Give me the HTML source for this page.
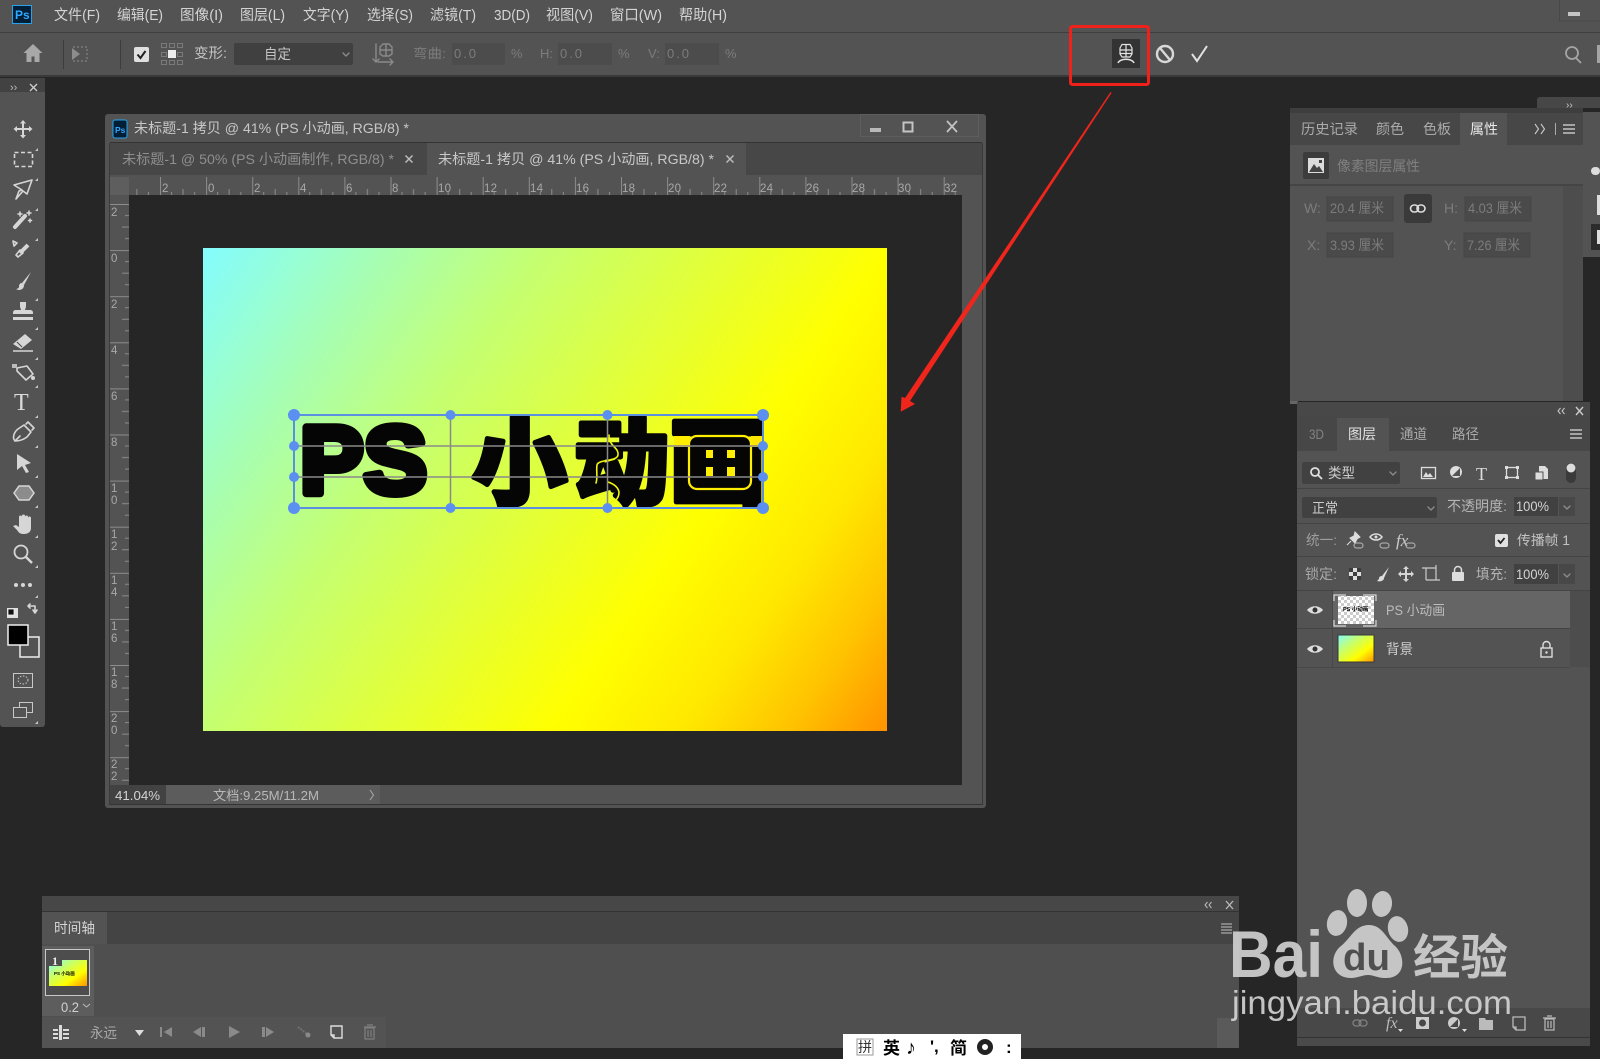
<!DOCTYPE html>
<html><head><meta charset="utf-8"><title>Photoshop</title>
<style>
html,body{margin:0;padding:0;background:#262626;width:1600px;height:1059px;overflow:hidden}
svg{display:block}
text{font-family:"Liberation Sans","Noto Sans CJK SC",sans-serif;font-size:14px;fill:#cfcfcf}
.m{fill:#d4d4d4;font-size:14.5px}
.d{fill:#7c7c7c;font-size:13px}
.s{fill:#aaa;font-size:13px}
.b{fill:#c8c8c8;font-size:14px}
.r{fill:#a8a8a8;font-size:11.5px}
.i{fill:none;stroke:#d6d6d6;stroke-width:1.6;stroke-linejoin:round;stroke-linecap:round}
.f{fill:#d6d6d6;stroke:none}
.g{fill:none;stroke:#8a8a8a;stroke-width:1.4;stroke-linecap:round;stroke-linejoin:round}
.gf{fill:#8a8a8a;stroke:none}
.big{font-family:"Noto Sans CJK SC",sans-serif;font-weight:900;font-size:95px;fill:#050505;stroke:#050505;stroke-width:5;stroke-linejoin:round}
.bw{fill:#cfcfcf;fill-opacity:.92}
</style></head><body>
<svg width="1600" height="1059" viewBox="0 0 1600 1059" xmlns="http://www.w3.org/2000/svg">
<defs>
<linearGradient id="gr" gradientUnits="userSpaceOnUse" x1="203" y1="248" x2="887" y2="731">
<stop offset="0" stop-color="#84fdff"/><stop offset=".33" stop-color="#c4ff72"/><stop offset=".67" stop-color="#ffff00"/><stop offset=".8" stop-color="#ffe800"/><stop offset=".9" stop-color="#ffc400"/><stop offset="1" stop-color="#ff9200"/>
</linearGradient>
<linearGradient id="gs" x1="0" y1="0" x2="1" y2="1">
<stop offset="0" stop-color="#7ffdff"/><stop offset=".33" stop-color="#c4ff72"/><stop offset=".67" stop-color="#ffff00"/><stop offset="1" stop-color="#ff9200"/>
</linearGradient>
<pattern id="ch" width="6" height="6" patternUnits="userSpaceOnUse"><rect width="6" height="6" fill="#fff"/><rect width="3" height="3" fill="#ccc"/><rect x="3" y="3" width="3" height="3" fill="#ccc"/></pattern>
<pattern id="htick" x="160" y="177" width="46.1" height="18" patternUnits="userSpaceOnUse"><path d="M.5 0V18M11.5 15V18M23 12V18M34.6 15V18" stroke="#8c8c8c" stroke-width="1" fill="none"/></pattern>
<pattern id="vtick" x="110" y="204" width="19" height="46.1" patternUnits="userSpaceOnUse"><path d="M0 .5H19M15 11.5H19M12 23H19M15 34.6H19" stroke="#8c8c8c" stroke-width="1" fill="none"/></pattern>
</defs>
<rect width="1600" height="1059" fill="#262626"/>

<!-- menu -->
<rect width="1600" height="32" fill="#535353"/><rect y="32" width="1600" height="1" fill="#3e3e3e"/>
<rect y="33" width="1600" height="42" fill="#535353"/><rect y="75" width="1600" height="2" fill="#3a3a3a"/>
<rect x="12.5" y="5.5" width="19" height="18" fill="#001e36" stroke="#27a4e8"/>
<text x="15" y="19" style="font-size:12px;fill:#31a8ff;font-weight:bold">Ps</text>
<text class="m" x="54" y="20" textLength="46" lengthAdjust="spacingAndGlyphs">文件(F)</text>
<text class="m" x="117" y="20" textLength="46" lengthAdjust="spacingAndGlyphs">编辑(E)</text>
<text class="m" x="180" y="20" textLength="43" lengthAdjust="spacingAndGlyphs">图像(I)</text>
<text class="m" x="240" y="20" textLength="45" lengthAdjust="spacingAndGlyphs">图层(L)</text>
<text class="m" x="303" y="20" textLength="46" lengthAdjust="spacingAndGlyphs">文字(Y)</text>
<text class="m" x="367" y="20" textLength="46" lengthAdjust="spacingAndGlyphs">选择(S)</text>
<text class="m" x="430" y="20" textLength="46" lengthAdjust="spacingAndGlyphs">滤镜(T)</text>
<text class="m" x="494" y="20" textLength="36" lengthAdjust="spacingAndGlyphs">3D(D)</text>
<text class="m" x="546" y="20" textLength="47" lengthAdjust="spacingAndGlyphs">视图(V)</text>
<text class="m" x="610" y="20" textLength="52" lengthAdjust="spacingAndGlyphs">窗口(W)</text>
<text class="m" x="679" y="20" textLength="48" lengthAdjust="spacingAndGlyphs">帮助(H)</text>
<rect x="1559.5" y="-1" width="42" height="22" fill="none" stroke="#484848"/><rect x="1568" y="12" width="12" height="4" fill="#c4c4c4"/>

<!-- options -->
<path d="M33 44l-9.5 9h3v9h5v-5.5h3V62h5v-9h3z" fill="#a8a8a8"/>
<rect x="63" y="40" width="1" height="29" fill="#3c3c3c"/>
<path d="M73 47h14v14H73z" fill="none" stroke="#8c8c8c" stroke-dasharray="2 2"/><path d="M72 48l8 6-8 6z" fill="#8c8c8c"/>
<rect x="120" y="40" width="1" height="29" fill="#3c3c3c"/>
<rect x="134" y="47" width="15" height="15" rx="2" fill="#e0e0e0"/><path d="M137.500 54.500l3 3.500 5-7" fill="none" stroke="#222" stroke-width="2"/>
<g fill="none" stroke="#7a7a7a"><rect x="161.500" y="43.500" width="5" height="4"/><rect x="169.500" y="43.500" width="5" height="4"/><rect x="177.500" y="43.500" width="5" height="4"/><rect x="161.500" y="52.500" width="5" height="4"/><rect x="177.500" y="52.500" width="5" height="4"/><rect x="161.500" y="60.500" width="5" height="4"/><rect x="169.500" y="60.500" width="5" height="4"/><rect x="177.500" y="60.500" width="5" height="4"/></g><rect x="168" y="50" width="8" height="8" fill="#eee"/>
<text x="194" y="58" style="font-size:14px;fill:#c4c4c4" textLength="33" lengthAdjust="spacingAndGlyphs">变形:</text>
<rect x="234" y="43" width="119" height="22" rx="2" fill="#404040"/>
<text x="264" y="59" style="font-size:14px;fill:#c4c4c4" textLength="27" lengthAdjust="spacingAndGlyphs">自定</text>
<path d="M343 53l3 3 3-3" class="g"/>
<g class="g"><path d="M376 44v18M373 59l3 3 3-3M378 62h15M390 59l3 3-3 3"/><path d="M380 47l3-3h6l3 3v7l-3 2h-6l-3-2zM380 50h12M386 44v12"/></g>
<text class="d" x="413" y="58" textLength="33" lengthAdjust="spacingAndGlyphs">弯曲:</text>
<rect x="452" y="43" width="53" height="22" fill="#4c4c4c"/><text class="d" x="454" y="58" textLength="22">0.0</text><text class="d" x="511" y="58">%</text>
<text class="d" x="540" y="58">H:</text><rect x="558" y="43" width="54" height="22" fill="#4c4c4c"/><text class="d" x="560" y="58" textLength="22">0.0</text><text class="d" x="618" y="58">%</text>
<text class="d" x="648" y="58">V:</text><rect x="665" y="43" width="54" height="22" fill="#4c4c4c"/><text class="d" x="667" y="58" textLength="22">0.0</text><text class="d" x="725" y="58">%</text>
<rect x="1112" y="39" width="28" height="29" fill="#333"/>
<g fill="none" stroke="#e4e4e4" stroke-width="1.2"><path d="M1120 48l2-3.500h8l2 3.500v6l-2 3h-8l-2-3zM1120 50h12M1120 53.500h12M1126 44.500v12"/><path d="M1118 63c2-5 14-5 16 0" stroke-width="1.500"/></g>
<g fill="none" stroke="#d8d8d8" stroke-width="2.400"><ellipse cx="1165" cy="54" rx="8" ry="8"/><path d="M1160 48l10 12"/></g>
<path d="M1192 54l5 7 10-15" fill="none" stroke="#e2e2e2" stroke-width="2"/>
<g fill="none" stroke="#a4a4a4" stroke-width="1.800"><circle cx="1572" cy="53" r="6"/><path d="M1576 58l5 5"/></g><rect x="1597" y="45" width="3" height="18" fill="#a4a4a4"/>

<!-- tools -->
<rect x="0" y="78" width="45" height="649" rx="3" fill="#535353"/><rect x="0" y="78" width="45" height="14" fill="#424242"/>
<text x="10" y="91" style="font-size:11px;fill:#bbb">››</text><path d="M30 84l7 7M37 84l-7 7" stroke="#ccc" stroke-width="1.400"/>
<g transform="translate(23,129)"><path class="f" d="M0-9l3 3.500H1V-1h5v-2l3.500 3L6 3V1H1v5h2l-3 3.500L-3 6h2V1h-5v2l-3.500-3L-6-3v2h5v-4.500h-2z"/></g>
<rect x="14.500" y="152.500" width="18" height="14" fill="none" stroke="#d6d6d6" stroke-width="1.600" stroke-dasharray="4 2.500"/>
<path class="i" d="M14 185l18-5-5 14-4-3-7 8 3-8 3-1z"/>
<g transform="translate(23,219)"><path d="M-8 8L2-3" stroke="#d6d6d6" stroke-width="4" stroke-linecap="round"/><path class="i" d="M-3-7v4M-5-5h4M6-8v4M4-6h4M7 0v3M5.500 1.500h3"/></g>
<g transform="translate(23,249)"><path d="M-3 4L5-4" stroke="#d6d6d6" stroke-width="4"/><path class="i" d="M-5 8l-2-2 4-5 3 3zM-10-8l4 2-3 3z"/></g>
<g transform="translate(23,281)"><path d="M8-9L-1 2l2 2z" fill="#d6d6d6"/><path d="M-1 2c-3 0-3 3-3 4s-2 2-3 2c3 2 8 1 8-4z" fill="#d6d6d6"/></g>
<g transform="translate(23,311)"><path class="f" d="M-3-9h6v4c0 2-1 3-1 4h5c2 0 3 1 3 3v1H-10V2c0-2 1-3 3-3h5c0-1-1-2-1-4zM-10 6H10v3H-10z"/></g>
<g transform="translate(23,342)"><path class="f" d="M-10 2L2-8l7 6L-2 7z"/><path d="M-10 9H10" stroke="#d6d6d6" stroke-width="1.400"/><path d="M-6 0l5 5" stroke="#535353" stroke-width="1.200"/></g>
<g transform="translate(23,372)"><path class="i" d="M-6-4L4-6l6 8-7 6-9-9z"/><circle cx="10" cy="6" r="2" fill="#d6d6d6"/><path d="M-11-8h5v4h-5z" fill="#bbb"/></g>
<text x="14" y="410" style="font-family:'Liberation Serif',serif;font-size:24px;fill:#dcdcdc">T</text>
<g transform="translate(23,433)"><path class="i" d="M-8 8c-3-3-1-9 3-12L1-8l7 7-4 5c-4 3-9 4-12 4zM-8 8l5-5M3-9l2-2 6 6-2 2"/></g>
<path class="f" d="M17 454l14 9-6 2 4 7-3 1-4-7-5 4z"/>
<path d="M14 493l5-7h10l5 7-5 7H19z" fill="#8c8c8c" stroke="#d6d6d6" stroke-width="1.500"/>
<g transform="translate(23,524)"><path class="f" d="M-10 2l3-1 3 2V-7a1.500 1.500 0 013 0v-1a1.500 1.500 0 013 0v1a1.500 1.500 0 013 0v1a1.500 1.500 0 013 0V4c0 4-3 6-7 6s-5-1-7-4z"/></g>
<g fill="none" stroke="#d6d6d6" stroke-width="1.800"><circle cx="21" cy="552" r="6.500"/><path d="M26 557l6 6" stroke-width="2.400"/></g>
<g fill="#d6d6d6"><circle cx="16" cy="585" r="2"/><circle cx="23" cy="585" r="2"/><circle cx="30" cy="585" r="2"/></g>
<g><rect x="7" y="608" width="11" height="10" fill="#e0e0e0"/><rect x="8" y="609" width="6" height="6" fill="#111" stroke="#eee" stroke-width=".8"/></g>
<path class="i" d="M28 606h7v6M33 610l2 3 2-3M28 606l2-2M28 606l2 2"/>
<rect x="20" y="637" width="19" height="20" fill="#535353" stroke="#eee" stroke-width="1.500"/>
<rect x="8" y="625" width="20" height="20" fill="#000" stroke="#eee" stroke-width="1.500"/>
<rect x="13.500" y="673.500" width="19" height="14" fill="none" stroke="#c8c8c8"/><ellipse cx="23" cy="680" rx="5" ry="4" fill="none" stroke="#c8c8c8" stroke-dasharray="1.500 1.500"/>
<rect x="19.500" y="702.500" width="13" height="10" fill="#535353" stroke="#c8c8c8"/><rect x="13.500" y="707.500" width="13" height="10" fill="#535353" stroke="#c8c8c8"/>
<g fill="#c8c8c8"><path d="M38 148v3h-3zM38 178v3h-3zM38 208v3h-3zM38 238v3h-3zM38 298v3h-3zM38 327v3h-3zM38 357v3h-3zM38 385v3h-3zM38 415v3h-3zM38 445v3h-3zM38 475v3h-3zM38 505v3h-3zM38 535v3h-3zM38 565v3h-3zM38 595v3h-3zM38 721v3h-3z"/></g>

<!-- document window -->
<rect x="105" y="114" width="881" height="694" rx="3" fill="#535353"/>
<rect x="110" y="142" width="872" height="1" fill="#333"/>
<rect x="982" y="143" width="1" height="662" fill="#3a3a3a"/><rect x="109" y="143" width="1" height="662" fill="#3a3a3a"/>
<rect x="113" y="120" width="14" height="18" rx="2" fill="#001e36" stroke="#27a4e8"/>
<text x="115" y="133" style="font-size:8.500px;fill:#31a8ff;font-weight:bold">Ps</text>
<text x="134" y="133" class="b" textLength="275" lengthAdjust="spacingAndGlyphs">未标题-1 拷贝 @ 41% (PS 小动画, RGB/8) *</text>
<rect x="860.500" y="114.500" width="118" height="22" fill="none" stroke="#5e5e5e"/>
<rect x="870" y="128" width="11" height="4" fill="#b8b8b8"/><rect x="903.500" y="122.500" width="9" height="9" fill="none" stroke="#c4c4c4" stroke-width="2"/>
<path d="M947 121l10 11M957 121l-10 11" stroke="#c4c4c4" stroke-width="1.800"/>
<rect x="110" y="143" width="872" height="32" fill="#474747"/>
<rect x="427" y="143" width="319" height="32" fill="#535353"/>
<text x="122" y="164" style="font-size:14px;fill:#8f8f8f" textLength="272" lengthAdjust="spacingAndGlyphs">未标题-1 @ 50% (PS 小动画制作, RGB/8) *</text>
<path d="M405.500 155.500l7 7M412.500 155.500l-7 7" stroke="#bbb" stroke-width="1.500"/>
<text x="438" y="164" class="b" textLength="276" lengthAdjust="spacingAndGlyphs">未标题-1 拷贝 @ 41% (PS 小动画, RGB/8) *</text>
<path d="M726.500 155.500l7 7M733.500 155.500l-7 7" stroke="#bbb" stroke-width="1.500"/>
<!-- rulers -->
<rect x="110" y="177" width="852" height="18" fill="#535353"/><rect x="129" y="177" width="833" height="18" fill="url(#htick)"/>
<rect x="110" y="177" width="19" height="18" fill="#5e5e5e"/>
<rect x="110" y="195" width="19" height="590" fill="#535353"/><rect x="110" y="195" width="19" height="590" fill="url(#vtick)"/>
<g class="r">
<text class="r" x="162" y="192">2</text><text class="r" x="208" y="192">0</text><text class="r" x="254" y="192">2</text><text class="r" x="300" y="192">4</text><text class="r" x="346" y="192">6</text><text class="r" x="392" y="192">8</text><text class="r" x="438" y="192" textLength="13">10</text><text class="r" x="484" y="192" textLength="13">12</text><text class="r" x="530" y="192" textLength="13">14</text><text class="r" x="576" y="192" textLength="13">16</text><text class="r" x="622" y="192" textLength="13">18</text><text class="r" x="668" y="192" textLength="13">20</text><text class="r" x="714" y="192" textLength="13">22</text><text class="r" x="760" y="192" textLength="13">24</text><text class="r" x="806" y="192" textLength="13">26</text><text class="r" x="852" y="192" textLength="13">28</text><text class="r" x="898" y="192" textLength="13">30</text><text class="r" x="944" y="192" textLength="13">32</text>
<text class="r" x="111" y="216">2</text><text class="r" x="111" y="262">0</text><text class="r" x="111" y="308">2</text><text class="r" x="111" y="354">4</text><text class="r" x="111" y="400">6</text><text class="r" x="111" y="446">8</text>
<text class="r" x="111" y="492">1</text><text class="r" x="111" y="504">0</text><text class="r" x="111" y="538">1</text><text class="r" x="111" y="550">2</text><text class="r" x="111" y="584">1</text><text class="r" x="111" y="596">4</text><text class="r" x="111" y="630">1</text><text class="r" x="111" y="642">6</text><text class="r" x="111" y="676">1</text><text class="r" x="111" y="688">8</text><text class="r" x="111" y="722">2</text><text class="r" x="111" y="734">0</text><text class="r" x="111" y="768">2</text><text class="r" x="111" y="780">2</text>
</g>
<rect x="129" y="195" width="833" height="590" fill="#262626"/>
<rect x="203" y="248" width="684" height="483" fill="url(#gr)"/>
<!-- status -->
<rect x="110" y="785" width="872" height="19" fill="#535353"/><rect x="110" y="785" width="56" height="19" fill="#424242"/><rect x="166" y="785" width="214" height="19" fill="#5c5c5c"/>
<rect x="110" y="804" width="872" height="1" fill="#333"/>
<text x="115" y="800" style="font-size:13px;fill:#d4d4d4" textLength="45" lengthAdjust="spacingAndGlyphs">41.04%</text>
<text x="213" y="800" style="font-size:13px;fill:#b8b8b8" textLength="106" lengthAdjust="spacingAndGlyphs">文档:9.25M/11.2M</text>
<path d="M370 790l3.500 5-3.500 5" fill="none" stroke="#aaa"/>

<!-- canvas text -->
<text x="300" y="493" textLength="127" lengthAdjust="spacingAndGlyphs" style="font-family:'Liberation Sans',sans-serif;font-weight:bold;font-size:96px;fill:#050505;stroke:#050505;stroke-width:8;stroke-linejoin:round">PS</text>
<text class="big" x="472" y="497">小</text>
<text class="big" x="574" y="497">动</text>
<text class="big" x="670" y="497">画</text>
<!-- glyph detailing -->
<g fill="none" stroke="#f4f50c" stroke-width="1.600" stroke-linecap="round"><path d="M609 435c0 12 10 12 9 20-1 7-20 4-21 10-1 6 1 12-1 18M608 482c6 2 10 5 11 10 0 6-3 9-9 11"/></g>
<rect x="674" y="436" width="16" height="11" fill="#ffee00"/><rect x="751" y="436" width="12" height="11" fill="#ffe600"/>
<rect x="689" y="436" width="62" height="53" rx="8" fill="#050505" stroke="#ffee00" stroke-width="2.200"/>
<g fill="#ffee00"><rect x="706" y="450" width="7" height="8"/><rect x="727" y="450" width="8" height="8"/><rect x="706" y="467" width="7" height="9"/><rect x="727" y="467" width="8" height="9"/></g>
<g fill="none" stroke="#8a8a8a" stroke-width="1.500"><path d="M294 446H763M294 477H763M450.500 415V508M607.500 415V508"/></g>
<rect x="294" y="415" width="469" height="93" fill="none" stroke="#5d8fe0" stroke-width="2"/>
<g fill="#5b8ff0"><circle cx="294" cy="415" r="6"/><circle cx="450.500" cy="415" r="5"/><circle cx="607.500" cy="415" r="5"/><circle cx="763" cy="415" r="6"/><circle cx="294" cy="446" r="5"/><circle cx="763" cy="446" r="5"/><circle cx="294" cy="477" r="5"/><circle cx="763" cy="477" r="5"/><circle cx="294" cy="508" r="6"/><circle cx="450.500" cy="508" r="5"/><circle cx="607.500" cy="508" r="5"/><circle cx="763" cy="508" r="6"/></g>

<!-- annotation -->
<rect x="1070.500" y="26.500" width="78" height="58" rx="2" fill="none" stroke="#f0201a" stroke-width="3"/>
<path d="M1110.500 92L1111.500 93 910 401 915 404 900.700 411.700 901.500 396.700 905 398z" fill="#f0251b"/>

<!-- collapsed dock -->
<path d="M1537 108v-8a3 3 0 013-3h60v11z" fill="#474747"/><text x="1566" y="108" style="font-size:10px;fill:#ccc">››</text>
<rect x="1583" y="112" width="17" height="145" fill="#535353"/>
<rect x="1591" y="167" width="9" height="8" rx="4" fill="#ddd"/><rect x="1597" y="195" width="3" height="20" fill="#ddd"/><rect x="1591" y="224" width="9" height="26" fill="#2c2c2c"/><rect x="1597" y="230" width="3" height="14" fill="#ddd"/>

<!-- properties -->
<rect x="1290" y="108" width="293" height="293" fill="#535353"/><rect x="1290" y="108" width="293" height="5" fill="#3e3e3e"/>
<rect x="1290" y="113" width="293" height="32" fill="#474747"/><rect x="1460" y="113" width="47" height="33" fill="#535353"/>
<text class="s" x="1301" y="134" style="font-size:14px" textLength="57" lengthAdjust="spacingAndGlyphs">历史记录</text>
<text class="s" x="1376" y="134" style="font-size:14px" textLength="28" lengthAdjust="spacingAndGlyphs">颜色</text>
<text class="s" x="1423" y="134" style="font-size:14px" textLength="28" lengthAdjust="spacingAndGlyphs">色板</text>
<text x="1470" y="134" style="font-size:14px;fill:#e8e8e8" textLength="28" lengthAdjust="spacingAndGlyphs">属性</text>
<path d="M1535 124l3.500 5-3.500 5M1541 124l3.500 5-3.500 5" fill="none" stroke="#ccc" stroke-width="1.100"/><rect x="1555" y="123" width="1" height="12" fill="#aaa"/>
<path d="M1563 125h12M1563 129h12M1563 133h12" stroke="#c4c4c4" stroke-width="1.500"/>
<rect x="1303" y="152" width="26" height="27" rx="2" fill="#3c3c3c"/>
<rect x="1308" y="158" width="16" height="15" fill="#dcdcdc"/><path d="M1309 172l5-8 3 4 2-2 4 6z" fill="#444"/><rect x="1319" y="160" width="3" height="3" fill="#444"/>
<text x="1337" y="171" style="font-size:14px;fill:#808080" textLength="83" lengthAdjust="spacingAndGlyphs">像素图层属性</text>
<rect x="1290" y="184" width="293" height="2" fill="#454545"/>
<rect x="1563" y="186" width="20" height="215" fill="#4d4d4d"/>
<rect x="1327" y="197" width="66" height="24" fill="#4a4a4a" stroke="#464646"/><rect x="1465" y="197" width="66" height="24" fill="#4a4a4a" stroke="#464646"/><rect x="1327" y="233" width="66" height="24" fill="#4a4a4a" stroke="#464646"/><rect x="1464" y="233" width="66" height="24" fill="#4a4a4a" stroke="#464646"/>
<text class="d" x="1304" y="213" style="font-size:14px">W:</text><text class="d" x="1330" y="213" style="font-size:14px" textLength="54" lengthAdjust="spacingAndGlyphs">20.4 厘米</text>
<rect x="1404" y="194" width="28" height="29" rx="3" fill="#3a3a3a"/><g fill="none" stroke="#dcdcdc" stroke-width="1.600"><rect x="1410.500" y="205" width="8" height="7" rx="3.500"/><rect x="1417" y="205" width="8" height="7" rx="3.500"/></g>
<text class="d" x="1444" y="213" style="font-size:14px">H:</text><text class="d" x="1468" y="213" style="font-size:14px" textLength="54" lengthAdjust="spacingAndGlyphs">4.03 厘米</text>
<text class="d" x="1307" y="250" style="font-size:14px">X:</text><text class="d" x="1330" y="250" style="font-size:14px" textLength="54" lengthAdjust="spacingAndGlyphs">3.93 厘米</text>
<text class="d" x="1444" y="250" style="font-size:14px">Y:</text><text class="d" x="1467" y="250" style="font-size:14px" textLength="53" lengthAdjust="spacingAndGlyphs">7.26 厘米</text>
<rect x="1290" y="401" width="8" height="3" fill="#666"/>

<!-- layers -->
<rect x="1297" y="402" width="293" height="644" rx="3" fill="#535353"/>
<rect x="1297" y="402" width="293" height="15" fill="#484848"/>
<path d="M1560.500 408l-2.500 3 2.500 3M1564.500 408l-2.500 3 2.500 3" fill="none" stroke="#ccc"/><path d="M1576 407l7 8M1583 407l-7 8" stroke="#ccc" stroke-width="1.400"/>
<rect x="1297" y="417" width="293" height="34" fill="#474747"/><rect x="1337" y="418" width="52" height="33" fill="#535353"/>
<text x="1309" y="439" style="font-size:13.500px;fill:#828282" textLength="15" lengthAdjust="spacingAndGlyphs">3D</text>
<text x="1348" y="439" style="font-size:14px;fill:#e2e2e2" textLength="28" lengthAdjust="spacingAndGlyphs">图层</text>
<text class="s" x="1400" y="439" style="font-size:14px" textLength="27" lengthAdjust="spacingAndGlyphs">通道</text>
<text class="s" x="1452" y="439" style="font-size:14px" textLength="27" lengthAdjust="spacingAndGlyphs">路径</text>
<path d="M1570 430h12M1570 434h12M1570 438h12" stroke="#c4c4c4" stroke-width="1.500"/>
<rect x="1302" y="462" width="98" height="22" rx="2" fill="#414141"/>
<g fill="none" stroke="#e0e0e0" stroke-width="1.800"><circle cx="1315" cy="472" r="4"/><path d="M1318 475l4 4"/></g>
<text x="1328" y="478" style="font-size:14px;fill:#ccc" textLength="27" lengthAdjust="spacingAndGlyphs">类型</text><path d="M1390 472l3 3 3-3" class="g"/>
<rect x="1421.500" y="467.500" width="14" height="11" fill="#535353" stroke="#ddd" stroke-width="1.300"/><path d="M1423 477l3-5 2 3 2-2 3 4z" fill="#ddd"/>
<circle cx="1456" cy="472" r="6" fill="#ddd"/><path d="M1452 476l8-8v8z" fill="#535353"/>
<text x="1476" y="480" style="font-family:'Liberation Serif',serif;font-size:18px;fill:#ddd">T</text>
<rect x="1506.500" y="467.500" width="11" height="10" fill="none" stroke="#ddd" stroke-width="1.300"/><g fill="#ddd"><rect x="1505" y="466" width="3" height="3"/><rect x="1516" y="466" width="3" height="3"/><rect x="1505" y="476" width="3" height="3"/><rect x="1516" y="476" width="3" height="3"/></g>
<path d="M1539 466h6l3 3v10h-9z" fill="#ddd"/><rect x="1535" y="472" width="8" height="8" fill="#ddd" stroke="#535353"/>
<rect x="1566" y="463" width="10" height="20" rx="5" fill="#3a3a3a"/><circle cx="1571" cy="468" r="4.500" fill="#ddd"/>
<rect x="1297" y="488" width="293" height="1" fill="#444"/>
<rect x="1302" y="497" width="135" height="21" rx="2" fill="#414141"/>
<text x="1312" y="513" style="font-size:14px;fill:#ccc" textLength="26" lengthAdjust="spacingAndGlyphs">正常</text><path d="M1428 507l3 3 3-3" class="g"/>
<text x="1447" y="511" style="font-size:14px;fill:#b4b4b4" textLength="60" lengthAdjust="spacingAndGlyphs">不透明度:</text>
<rect x="1514" y="497" width="44" height="19" fill="#414141"/><rect x="1559" y="497" width="16" height="19" fill="#484848"/>
<text x="1516" y="511" style="font-size:13.500px;fill:#d4d4d4" textLength="33" lengthAdjust="spacingAndGlyphs">100%</text><path d="M1564 506l3 3 3-3" class="g"/>
<rect x="1297" y="523" width="293" height="1" fill="#444"/>
<text x="1306" y="545" style="font-size:14px;fill:#9e9e9e" textLength="31" lengthAdjust="spacingAndGlyphs">统一:</text>
<path d="M1355 532l5 5-3 2-2 4-5-5 4-2zM1347 545l4-4" fill="#ddd" stroke="#ddd"/><rect x="1354" y="543" width="9" height="5" rx="2.500" fill="none" stroke="#bbb"/>
<path d="M1370 537c3-4 9-4 12 0-3 4-9 4-12 0z" fill="none" stroke="#ddd" stroke-width="1.500"/><circle cx="1376" cy="537" r="1.500" fill="#ddd"/><rect x="1380" y="543" width="9" height="5" rx="2.500" fill="none" stroke="#bbb"/>
<text x="1396" y="546" style="font-family:'Liberation Serif',serif;font-size:17px;font-style:italic;fill:#ccc">fx</text><rect x="1406" y="543" width="9" height="5" rx="2.500" fill="none" stroke="#bbb"/>
<rect x="1495" y="534" width="13" height="13" rx="2" fill="#e0e0e0"/><path d="M1498 540l2.500 3 4-5" fill="none" stroke="#222" stroke-width="1.800"/>
<text x="1517" y="545" style="font-size:13.500px;fill:#c4c4c4" textLength="53" lengthAdjust="spacingAndGlyphs">传播帧 1</text>
<rect x="1297" y="556" width="293" height="1" fill="#444"/>
<text x="1305" y="579" style="font-size:14px;fill:#a8a8a8" textLength="32" lengthAdjust="spacingAndGlyphs">锁定:</text>
<rect x="1349" y="568" width="12" height="12" fill="#ddd"/><g fill="#3c3c3c"><rect x="1349" y="568" width="4" height="4"/><rect x="1357" y="568" width="4" height="4"/><rect x="1353" y="572" width="4" height="4"/><rect x="1349" y="576" width="4" height="4"/><rect x="1357" y="576" width="4" height="4"/></g>
<path d="M1389 567l-7 9 2 2zM1382 576c-3 0-3 2-3 3l-2 2c3 1 7 0 7-3z" fill="#ddd"/>
<path class="f" d="M1406 566l3 3h-2v4h4v-2l3 3-3 3v-2h-4v4h2l-3 3-3-3h2v-4h-4v2l-3-3 3-3v2h4v-4h-2z"/>
<g fill="none" stroke="#ccc" stroke-width="1.200"><path d="M1426 568h10v12M1426 568v12M1426 580h14M1422 568h4M1436 565v3"/></g>
<rect x="1452" y="572" width="12" height="9" rx="1" fill="#ddd"/><path d="M1454.500 572v-2a3.500 3.500 0 017 0v2" fill="none" stroke="#ddd" stroke-width="1.500"/>
<text x="1476" y="579" style="font-size:14px;fill:#b4b4b4" textLength="31" lengthAdjust="spacingAndGlyphs">填充:</text>
<rect x="1514" y="564" width="44" height="20" fill="#414141"/><rect x="1559" y="564" width="16" height="20" fill="#484848"/>
<text x="1516" y="579" style="font-size:13.500px;fill:#d4d4d4" textLength="33" lengthAdjust="spacingAndGlyphs">100%</text><path d="M1564 574l3 3 3-3" class="g"/>
<rect x="1297" y="590" width="293" height="1" fill="#444"/>
<rect x="1570" y="591" width="20" height="76" fill="#4d4d4d"/>
<rect x="1332" y="591" width="238" height="37" fill="#656565"/><rect x="1297" y="628" width="273" height="1" fill="#444"/><rect x="1297" y="667" width="273" height="1" fill="#484848"/><rect x="1332" y="591" width="1" height="76" fill="#484848"/>
<g><path d="M1307 610c4-5 12-5 16 0-4 5-12 5-16 0z" fill="#ddd"/><circle cx="1315" cy="610" r="2.500" fill="#333"/><path d="M1307 649c4-5 12-5 16 0-4 5-12 5-16 0z" fill="#ddd"/><circle cx="1315" cy="649" r="2.500" fill="#333"/></g>
<rect x="1338" y="596" width="36" height="28" fill="url(#ch)"/>
<path d="M1334 601v-6h12M1363 595h13v6M1376 620v6h-13M1346 626h-12v-6" fill="none" stroke="#d8d8d8" stroke-width="1.200"/>
<text x="1343" y="611" style="font-size:5.500px;font-weight:bold;fill:#000">PS 小动画</text>
<text x="1386" y="615" style="font-size:13.500px;fill:#bcbcbc" textLength="59" lengthAdjust="spacingAndGlyphs">PS 小动画</text>
<rect x="1338" y="635" width="36" height="27" fill="url(#gs)" stroke="#3a3a3a"/>
<text x="1386" y="654" style="font-size:14px;fill:#cfcfcf" textLength="27" lengthAdjust="spacingAndGlyphs">背景</text>
<rect x="1541" y="648" width="11" height="9" fill="none" stroke="#ddd" stroke-width="1.400"/><path d="M1543 648v-3a3.500 3.500 0 017 0v3" fill="none" stroke="#ddd" stroke-width="1.400"/><circle cx="1546.500" cy="652.500" r="1.200" fill="#ddd"/>
<rect x="1297" y="1008" width="293" height="29" fill="#484848"/><rect x="1297" y="1037" width="293" height="1" fill="#333"/><rect x="1297" y="1038" width="293" height="8" fill="#4a4a4a"/>
<g fill="none" stroke="#808080" stroke-width="1.300"><rect x="1353" y="1020" width="8" height="6" rx="3"/><rect x="1359" y="1020" width="8" height="6" rx="3"/></g>
<text x="1386" y="1028" style="font-family:'Liberation Serif',serif;font-size:16px;font-style:italic;fill:#bbb">fx</text><path d="M1398 1029h5l-2.500 3z" fill="#ddd"/>
<rect x="1416" y="1017" width="13" height="12" fill="#ccc"/><circle cx="1422.500" cy="1023" r="3.500" fill="#484848"/>
<circle cx="1454" cy="1023" r="6" fill="#ccc"/><path d="M1450 1027l8-8v8z" fill="#484848"/><path d="M1462 1029h5l-2.500 3z" fill="#ddd"/>
<path d="M1479 1018h6l1 2h7v10h-14z" fill="#bbb"/>
<path d="M1513 1017h12v13h-9l-3-3zM1513 1027h3v3" fill="none" stroke="#bbb" stroke-width="1.300"/>
<g fill="none" stroke="#bbb" stroke-width="1.200"><rect x="1545" y="1019" width="9" height="11"/><path d="M1543 1018h13M1547 1016h5M1548 1021v7M1551 1021v7"/></g>

<!-- timeline -->
<rect x="42" y="896" width="1197" height="152" rx="3" fill="#4f4f4f"/>
<rect x="42" y="896" width="1197" height="15" fill="#474747"/><rect x="42" y="911" width="1197" height="1" fill="#333"/>
<rect x="42" y="912" width="1197" height="32" fill="#444"/><rect x="42" y="912" width="65" height="32" fill="#535353"/>
<text x="54" y="933" style="font-size:14px;fill:#d4d4d4" textLength="41" lengthAdjust="spacingAndGlyphs">时间轴</text>
<path d="M1207.500 902l-2.500 3 2.500 3M1211.500 902l-2.500 3 2.500 3" fill="none" stroke="#bbb"/><path d="M1226 901l7 8M1233 901l-7 8" stroke="#bbb" stroke-width="1.300"/>
<path d="M1221 924h11M1221 927h11M1221 930h11M1221 933h11" stroke="#a8a8a8" stroke-width="1.200"/>
<rect x="42" y="946" width="52" height="70" fill="#5d5d5d"/>
<rect x="45.500" y="949.500" width="44" height="46" fill="#4d4d4d" stroke="#c8c8c8"/>
<rect x="49" y="960" width="38" height="26" fill="url(#gs)"/><rect x="49" y="953" width="13" height="13" fill="#4d4d4d"/>
<text x="52" y="965" style="font-family:'Liberation Serif',serif;font-size:12px;font-weight:bold;fill:#eee">1</text>
<text x="54" y="975" style="font-size:4.500px;font-weight:bold;fill:#000">PS 小动画</text>
<text x="61" y="1012" style="font-size:14px;fill:#d0d0d0" textLength="18" lengthAdjust="spacingAndGlyphs">0.2</text><path d="M83 1004l3.500 3 3.500-3" fill="none" stroke="#bbb"/>
<rect x="42" y="1017" width="344" height="31" fill="#535353"/>
<g fill="#dcdcdc"><rect x="59" y="1025" width="3" height="15"/><rect x="53" y="1029" width="5" height="2"/><rect x="53" y="1033" width="5" height="2"/><rect x="53" y="1037" width="5" height="2"/><rect x="63" y="1029" width="6" height="2"/><rect x="63" y="1033" width="6" height="2"/><rect x="63" y="1037" width="6" height="2"/></g>
<text x="90" y="1038" style="font-size:14px;fill:#a8a8a8" textLength="27" lengthAdjust="spacingAndGlyphs">永远</text>
<path d="M135 1030h9l-4.500 6z" fill="#ddd"/>
<g fill="#8a8a8a"><rect x="160" y="1027" width="2" height="10"/><path d="M172 1027v10l-8-5z"/><path d="M201 1027v10l-8-5z"/><rect x="202" y="1027" width="3" height="10"/><path d="M229 1026l11 6-11 6z"/><rect x="262" y="1027" width="3" height="10"/><path d="M266 1027v10l8-5z"/></g>
<path d="M298 1027l9 7" stroke="#707070" stroke-width="2" stroke-dasharray="2 1"/><circle cx="308" cy="1035" r="2.500" fill="#8a8a8a"/>
<path d="M331 1026h11v12h-8l-3-3zM331 1035h3v3" fill="none" stroke="#ddd" stroke-width="1.400"/>
<g fill="none" stroke="#808080" stroke-width="1.200"><rect x="365" y="1028" width="9" height="11"/><path d="M364 1027h12M367 1025h6M368 1030v7M371 1030v7"/></g>
<rect x="1217" y="1018" width="22" height="30" fill="#5a5a5a"/>

<!-- IME -->
<rect x="843" y="1034" width="178" height="25" fill="#fff"/>
<rect x="857" y="1039" width="16" height="16" fill="none" stroke="#999"/>
<text x="858" y="1052" style="font-size:14px;fill:#333">拼</text>
<text x="883" y="1054" style="font-size:17px;font-weight:bold;fill:#000">英</text>
<text x="906" y="1054" style="font-size:20px;font-weight:bold;fill:#000">♪</text>
<text x="930" y="1052" style="font-size:17px;font-weight:bold;fill:#000">',</text>
<text x="950" y="1054" style="font-size:17px;font-weight:bold;fill:#000">简</text>
<circle cx="985" cy="1047" r="8" fill="#222"/><circle cx="985" cy="1047" r="3" fill="#fff"/>
<text x="1006" y="1053" style="font-size:17px;font-weight:bold;fill:#000">:</text>

<!-- watermark -->
<g>
<ellipse class="bw" cx="1357" cy="903" rx="10" ry="14"/><ellipse class="bw" cx="1382" cy="904" rx="10" ry="13" transform="rotate(8 1382 904)"/><ellipse class="bw" cx="1337" cy="923" rx="10" ry="13" transform="rotate(12 1337 923)"/><ellipse class="bw" cx="1398" cy="929" rx="10" ry="13" transform="rotate(-14 1398 929)"/>
<path class="bw" d="M1369 925c13 0 17 13 26 21 11 10 11 33-10 32-8 0-11-3-17-3s-10 3-17 3c-21 0-22-23-10-32 10-8 14-21 28-21z"/>
<text x="1343" y="970" textLength="47" lengthAdjust="spacingAndGlyphs" style="font-family:'Liberation Sans',sans-serif;font-size:38px;font-weight:bold;fill:#4f4f4f">du</text>
<text x="1229" y="977" textLength="94" lengthAdjust="spacingAndGlyphs" style="font-family:'Liberation Sans',sans-serif;font-size:66px;font-weight:bold;fill:#cfcfcf;fill-opacity:.92">Bai</text>
<text x="1413" y="974" textLength="95" lengthAdjust="spacingAndGlyphs" style="font-family:'Noto Sans CJK SC',sans-serif;font-size:48px;font-weight:bold;fill:#cfcfcf;fill-opacity:.92">经验</text>
<text x="1232" y="1014" textLength="280" lengthAdjust="spacingAndGlyphs" style="font-family:'Liberation Sans',sans-serif;font-size:33px;fill:#d6d6d6;fill-opacity:.9">jingyan.baidu.com</text>
</g>
</svg>
</body></html>
